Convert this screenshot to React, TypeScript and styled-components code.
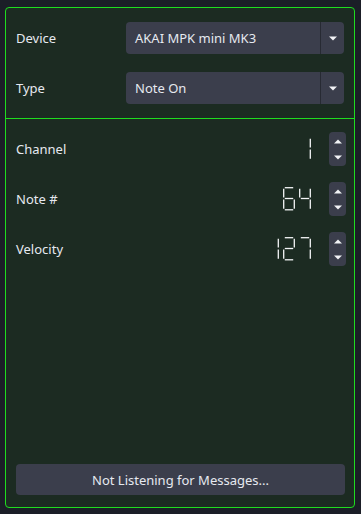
import React from "react";
import styled, { createGlobalStyle } from "styled-components";

const GlobalStyle = createGlobalStyle`
  html, body {
    margin: 0;
    padding: 0;
    background: #1b1e27;
  }
  body {
    font-family: "Noto Sans", "Open Sans", sans-serif;
    font-size: 13px;
    color: #e6e9f0;
  }
`;

const Panel = styled.div`
  box-sizing: border-box;
  margin: 7px 6px 0 5px;
  height: 501px;
  border: 1px solid #1fdc1f;
  border-radius: 4px;
  background: #1c2b22;
  display: flex;
  flex-direction: column;
`;

const TopSection = styled.div`
  display: grid;
  grid-template-columns: 110px 1fr;
  row-gap: 18px;
  padding: 14px 10px 14px 10px;
  border-bottom: 1px solid #1fdc1f;
`;

const BottomSection = styled.div`
  flex: 1;
  display: flex;
  flex-direction: column;
  padding: 13px 8px 12px 10px;
`;

const Label = styled.span`
  align-self: center;
  line-height: 16px;
`;

const SelectBox = styled.div`
  height: 32px;
  border-radius: 4px;
  background: #3b3e4c;
  display: flex;
  align-items: stretch;
`;

const SelectText = styled.span`
  flex: 1;
  display: flex;
  align-items: center;
  padding-left: 9px;
`;

const SelectArrow = styled.span`
  width: 23px;
  border-left: 1px solid #272a33;
  display: flex;
  align-items: center;
  justify-content: center;
`;

const NumberRows = styled.div`
  display: flex;
  flex-direction: column;
  gap: 16px;
`;

const NumberRow = styled.div`
  display: flex;
  align-items: center;
  height: 34px;
`;

const RowLabel = styled.span`
  flex: 1;
  line-height: 16px;
`;

const Display = styled.div`
  position: relative;
  display: flex;
  gap: 4px;
  margin-right: 18px;
`;

// real text laid over the drawn segments, kept invisible
const DisplayValue = styled.span`
  position: absolute;
  inset: 0;
  color: transparent;
  font-family: "DejaVu Sans Mono", monospace;
  font-size: 20px;
  line-height: 24px;
  text-align: right;
  white-space: nowrap;
`;

const Spinner = styled.div`
  width: 17px;
  height: 34px;
  border-radius: 4px;
  background: #3b3e4c;
  display: flex;
  flex-direction: column;
  align-items: center;
  justify-content: center;
  gap: 11px;
`;

const ListenButton = styled.button`
  margin-top: auto;
  margin-right: 1px;
  height: 31px;
  border: none;
  border-radius: 4px;
  background: #3b3e4c;
  color: #e6e9f0;
  font-family: "Noto Sans", "Open Sans", sans-serif;
  font-size: 13px;
  padding: 0;
`;

const Triangle: React.FC<{ down?: boolean }> = ({ down }) => (
  <svg width={8} height={5} viewBox="0 0 8 5">
    <path d={down ? "M0 0.5 L8 0.5 L4 4.5 Z" : "M0 4.5 L8 4.5 L4 0.5 Z"} fill="#f2f3f6" />
  </svg>
);

// seven segment map: a b c d e f g
const SEGS: Record<string, string> = {
  "0": "abcdef",
  "1": "bc",
  "2": "abged",
  "3": "abgcd",
  "4": "fgbc",
  "5": "afgcd",
  "6": "afgedc",
  "7": "abc",
  "8": "abcdefg",
  "9": "abcdfg",
};

const segLines: Record<string, [number, number, number, number]> = {
  a: [1.8, 0.7, 10.2, 0.7],
  b: [11.3, 1.8, 11.3, 10.6],
  c: [11.3, 12.4, 11.3, 21.7],
  d: [1.8, 22.8, 10.2, 22.8],
  e: [0.7, 12.4, 0.7, 21.7],
  f: [0.7, 1.8, 0.7, 10.6],
  g: [1.8, 11.5, 10.2, 11.5],
};

const Digit: React.FC<{ d: string }> = ({ d }) => (
  <svg width={12} height={24} viewBox="0 0 12 24" aria-hidden>
    {SEGS[d].split("").map((s) => {
      const [x1, y1, x2, y2] = segLines[s];
      return (
        <line key={s} x1={x1} y1={y1} x2={x2} y2={y2} stroke="#f4f5f7" strokeWidth={1.3} />
      );
    })}
  </svg>
);

const SegmentDisplay: React.FC<{ value: number }> = ({ value }) => (
  <Display>
    {String(value)
      .split("")
      .map((c, i) => (
        <Digit key={i} d={c} />
      ))}
    <DisplayValue>{value}</DisplayValue>
  </Display>
);

const fields = [
  { label: "Channel", value: 1 },
  { label: "Note #", value: 64 },
  { label: "Velocity", value: 127 },
];

export default function App() {
  return (
    <>
      <GlobalStyle />
      <Panel>
        <TopSection>
          <Label>Device</Label>
          <SelectBox>
            <SelectText>AKAI MPK mini MK3</SelectText>
            <SelectArrow>
              <Triangle down />
            </SelectArrow>
          </SelectBox>
          <Label>Type</Label>
          <SelectBox>
            <SelectText>Note On</SelectText>
            <SelectArrow>
              <Triangle down />
            </SelectArrow>
          </SelectBox>
        </TopSection>
        <BottomSection>
          <NumberRows>
            {fields.map((f) => (
              <NumberRow key={f.label}>
                <RowLabel>{f.label}</RowLabel>
                <SegmentDisplay value={f.value} />
                <Spinner>
                  <Triangle />
                  <Triangle down />
                </Spinner>
              </NumberRow>
            ))}
          </NumberRows>
          <ListenButton>Not Listening for Messages...</ListenButton>
        </BottomSection>
      </Panel>
    </>
  );
}
